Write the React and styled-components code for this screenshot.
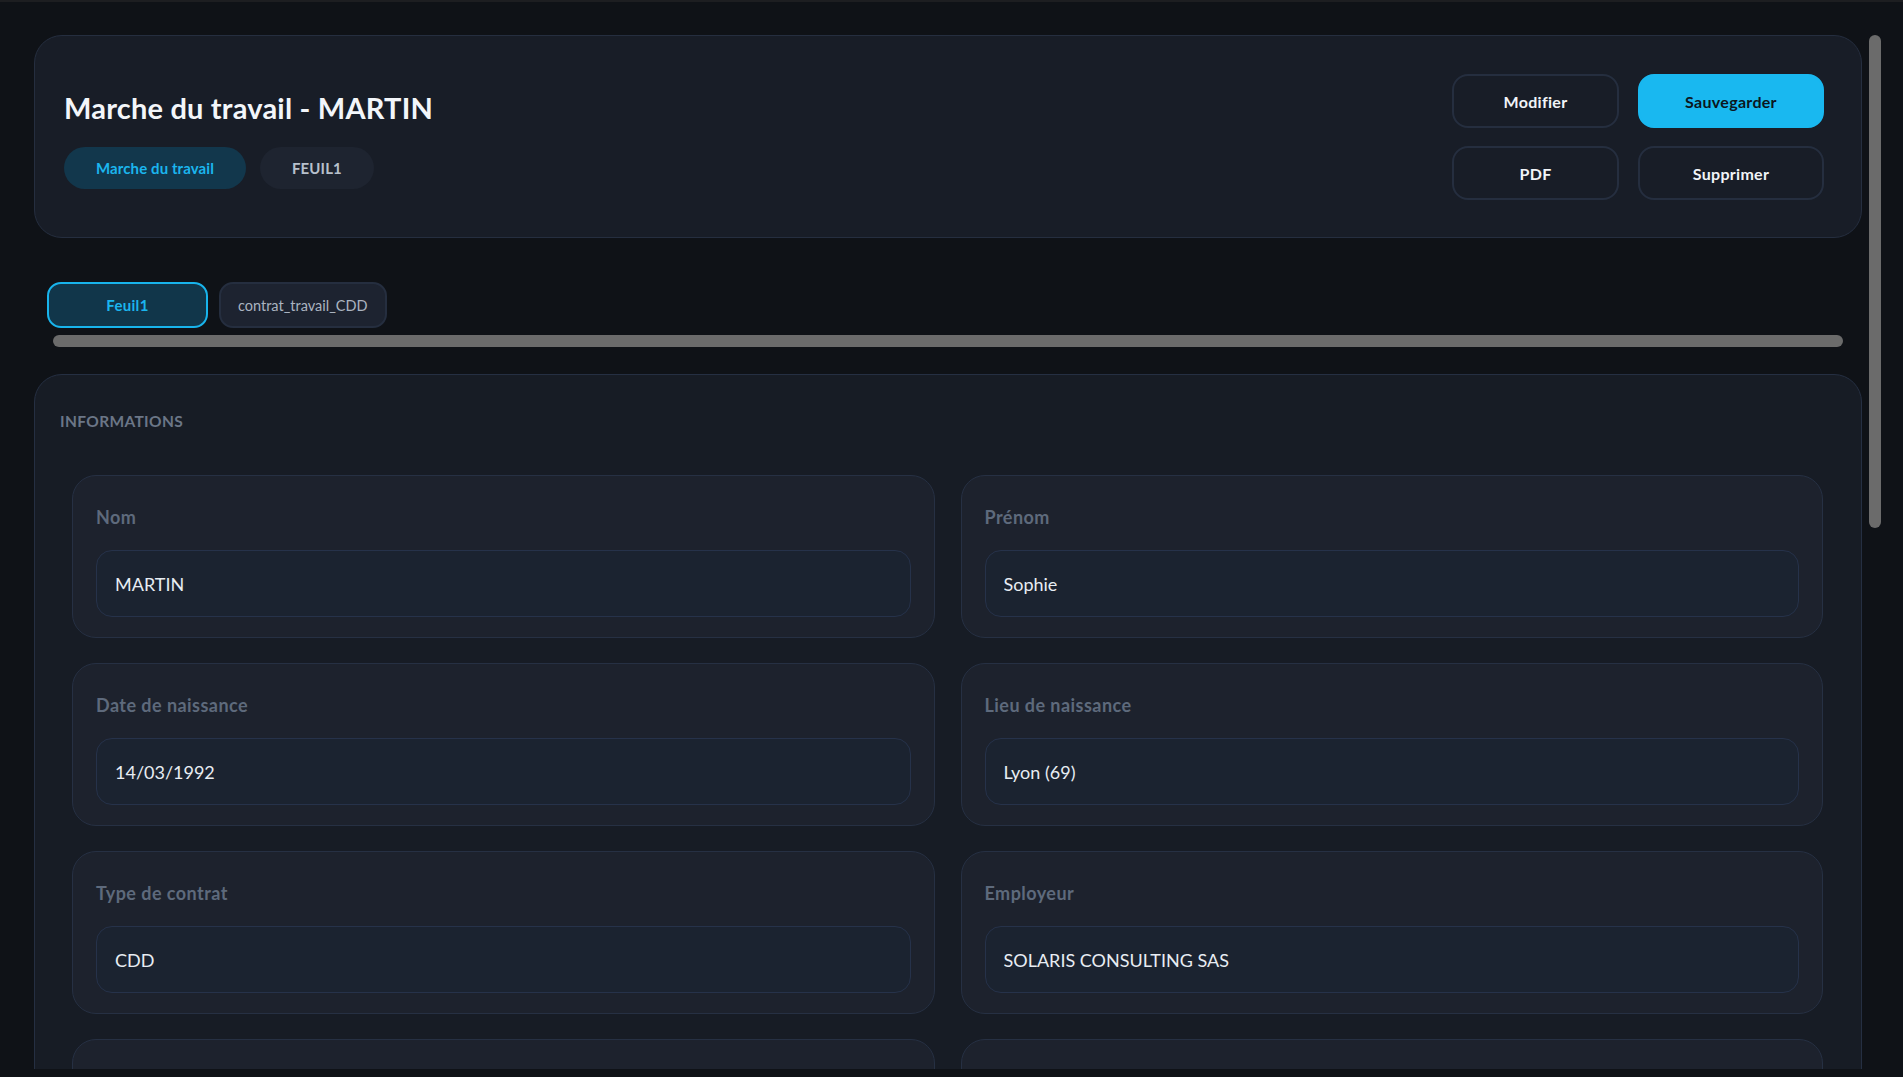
import React from "react";
import styled, { createGlobalStyle } from "styled-components";

const GlobalStyle = createGlobalStyle`
  * { box-sizing: border-box; }
  html, body { margin: 0; padding: 0; height: 100%; overflow: hidden; }
  body {
    background: #0f1217;
    font-family: "Segoe UI", Lato, "Liberation Sans", sans-serif;
    color: #e6ebf2;
  }
`;

const Page = styled.div`
  height: 100vh;
  border-top: 2px solid #1d1e21;
  padding: 33px 22px 8px 22px;
  display: flex;
`;

const Scroller = styled.main`
  flex: 1;
  min-width: 0;
  overflow: hidden;
  padding: 0 7px 0 12px;
  display: flex;
  flex-direction: column;
`;

const ScrollTrack = styled.div`
  flex: none;
  width: 12px;
`;

const ScrollThumb = styled.div`
  width: 12px;
  height: ${(p) => p.$size}px;
  background: #6b6b6b;
  border-radius: 6px;
`;

const HeaderCard = styled.header`
  flex: none;
  height: 203px;
  background: #181d27;
  border: 1px solid #252e3f;
  border-radius: 28px;
  padding: 0 37px 0 29px;
  display: flex;
  align-items: center;
  justify-content: space-between;
`;

const TitleBlock = styled.div`
  display: flex;
  flex-direction: column;
  gap: 22px;
  padding-top: 6px;
`;

const Title = styled.h1`
  margin: 0;
  font-size: 29px;
  line-height: 34px;
  font-weight: 700;
  letter-spacing: 0.2px;
  color: #f3f6fa;
`;

const PillRow = styled.div`
  display: flex;
  gap: 14px;
`;

const Pill = styled.span`
  height: 42px;
  padding: 0 32px;
  border-radius: 21px;
  display: inline-flex;
  align-items: center;
  font-size: 15px;
  font-weight: 700;
  letter-spacing: 0.1px;
  background: ${(p) => (p.$active ? "#12374c" : "#1e2430")};
  color: ${(p) => (p.$active ? "#1bb5ee" : "#b7c0cc")};
`;

const ActionGrid = styled.div`
  display: grid;
  grid-template-columns: 167px 186px;
  column-gap: 19px;
  row-gap: 18px;
  padding-top: 1px;
`;

const ActionButton = styled.button`
  height: 54px;
  border-radius: 16px;
  font-family: inherit;
  font-size: 16px;
  font-weight: 700;
  letter-spacing: 0.3px;
  cursor: pointer;
  border: 2px solid ${(p) => (p.$primary ? "#19b8f0" : "#252e3f")};
  background: ${(p) => (p.$primary ? "#19b8f0" : "transparent")};
  color: ${(p) => (p.$primary ? "#0b1620" : "#f1f4f8")};
`;

const TabStrip = styled.nav`
  flex: none;
  margin: 44px 13px 0 13px;
  display: flex;
  flex-direction: column;
  gap: 7px;
`;

const TabRow = styled.div`
  display: flex;
  gap: 11px;
`;

const HScrollThumb = styled.div`
  height: 12px;
  margin: 0 6px;
  background: #6b6b6b;
  border-radius: 6px;
`;

const Tab = styled.button`
  flex: none;
  height: 46px;
  min-width: 161px;
  padding: 0 17px;
  border-radius: 14px;
  font-family: inherit;
  font-size: ${(p) => (p.$active ? "15px" : "14.5px")};
  cursor: pointer;
  font-weight: ${(p) => (p.$active ? 700 : 400)};
  letter-spacing: ${(p) => (p.$active ? "0.3px" : "0")};
  background: ${(p) => (p.$active ? "#11364a" : "#1d2330")};
  border: 2px solid ${(p) => (p.$active ? "#18b4ec" : "#252e3f")};
  color: ${(p) => (p.$active ? "#1bb5ee" : "#aab3c0")};
`;

const InfoCard = styled.section`
  flex: none;
  margin-top: 27px;
  background: #171c25;
  border: 1px solid #252f42;
  border-radius: 28px;
  padding: 31px 25px 38px 25px;
`;

const SectionTitle = styled.h2`
  margin: 0 0 39px 0;
  font-size: 15.5px;
  line-height: 30px;
  font-weight: 700;
  letter-spacing: 0.35px;
  text-transform: uppercase;
  color: #6b7687;
`;

const FieldGrid = styled.div`
  display: grid;
  grid-template-columns: 1fr 1fr;
  column-gap: 26px;
  row-gap: 25px;
  padding: 0 13px 0 12px;
`;

const FieldCard = styled.div`
  height: 163px;
  background: #1d222d;
  border: 1px solid #263043;
  border-radius: 24px;
  padding: 29px 23px 20px 23px;
  display: flex;
  flex-direction: column;
  gap: 21px;
`;

const FieldLabel = styled.label`
  font-size: 18px;
  line-height: 24px;
  font-weight: 700;
  letter-spacing: 0.45px;
  color: #5e6a7c;
`;

const FieldInput = styled.input`
  height: 67px;
  width: 100%;
  background: #1b2330;
  border: 1px solid #26324a;
  border-radius: 16px;
  padding: 0 18px;
  font-family: inherit;
  font-size: 18px;
  color: #e8edf3;
  outline: none;
`;

const fields = [
  ["Nom", "MARTIN"],
  ["Prénom", "Sophie"],
  ["Date de naissance", "14/03/1992"],
  ["Lieu de naissance", "Lyon (69)"],
  ["Type de contrat", "CDD"],
  ["Employeur", "SOLARIS CONSULTING SAS"],
  ["Poste", "Chargée de projet"],
  ["Date de début", "02/09/2024"],
  ["Date de fin", "28/02/2025"],
  ["Durée hebdomadaire", "35 heures"],
  ["Salaire brut mensuel", "2 450 €"],
  ["Motif du CDD", "Accroissement temporaire d'activité"],
  ["Adresse", "12 rue des Lilas"],
  ["Code postal", "69003"],
  ["Ville", "Lyon"],
  ["Téléphone", "06 12 34 56 78"],
  ["Email", "sophie.martin@email.fr"],
  ["Statut", "Non-cadre"],
];

export default function App() {
  return (
    <>
      <GlobalStyle />
      <Page>
        <Scroller>
          <HeaderCard>
            <TitleBlock>
              <Title>Marche du travail - MARTIN</Title>
              <PillRow>
                <Pill $active>Marche du travail</Pill>
                <Pill>FEUIL1</Pill>
              </PillRow>
            </TitleBlock>
            <ActionGrid>
              <ActionButton>Modifier</ActionButton>
              <ActionButton $primary>Sauvegarder</ActionButton>
              <ActionButton>PDF</ActionButton>
              <ActionButton>Supprimer</ActionButton>
            </ActionGrid>
          </HeaderCard>

          <TabStrip>
            <TabRow>
              <Tab $active>Feuil1</Tab>
              <Tab>contrat_travail_CDD</Tab>
            </TabRow>
            <HScrollThumb />
          </TabStrip>

          <InfoCard>
            <SectionTitle>Informations</SectionTitle>
            <FieldGrid>
              {fields.map(([label, value]) => (
                <FieldCard key={label}>
                  <FieldLabel>{label}</FieldLabel>
                  <FieldInput defaultValue={value} readOnly />
                </FieldCard>
              ))}
            </FieldGrid>
          </InfoCard>
        </Scroller>
        <ScrollTrack>
          <ScrollThumb $size={493} />
        </ScrollTrack>
      </Page>
    </>
  );
}
